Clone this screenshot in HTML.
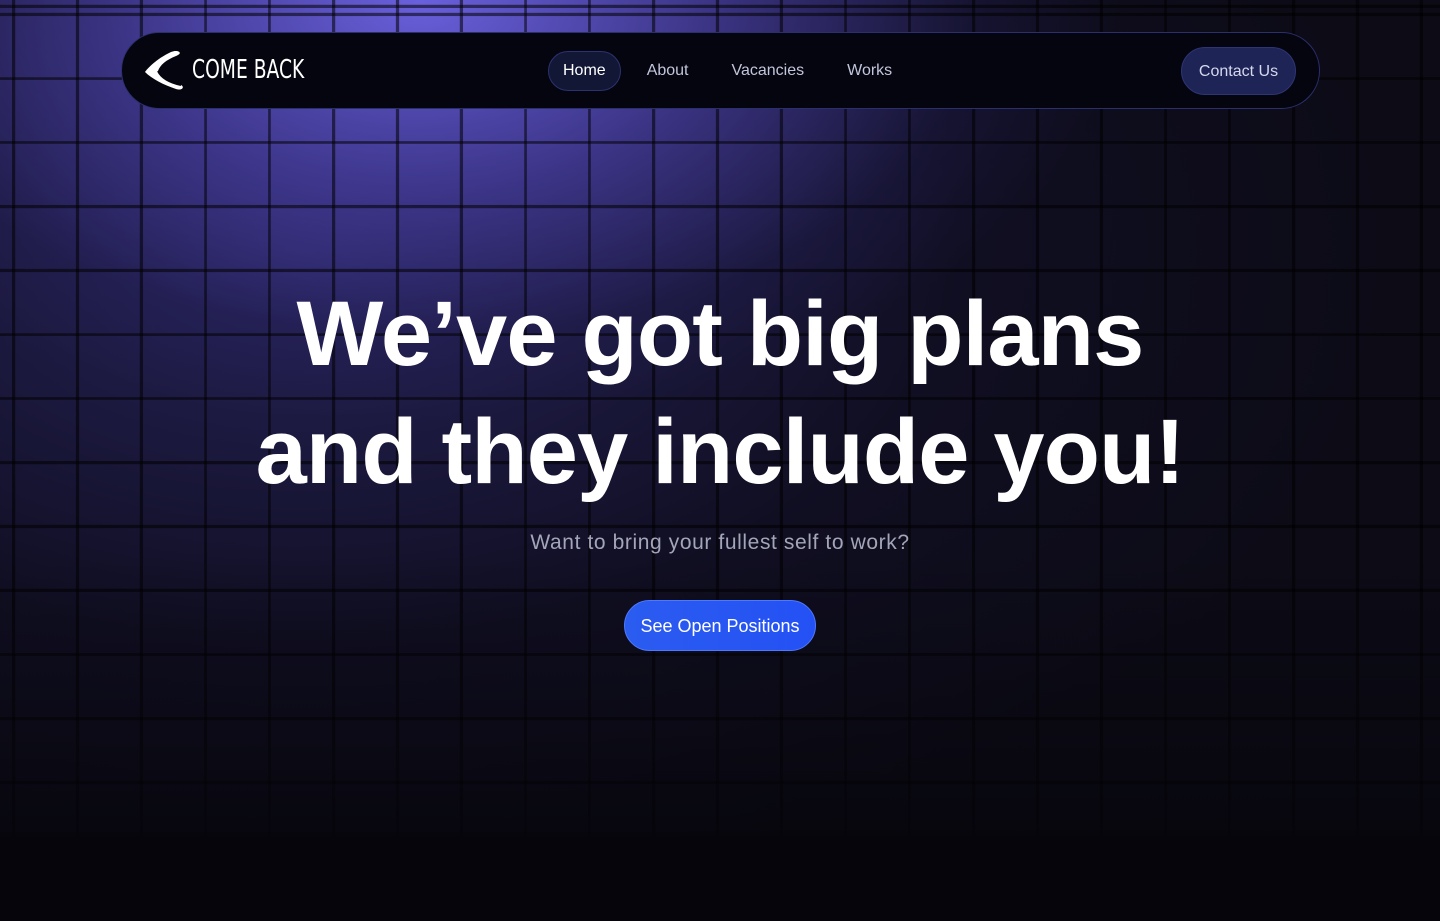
<!DOCTYPE html>
<html><head><meta charset="utf-8"><style>
*{margin:0;padding:0;box-sizing:border-box}
body{width:1440px;height:921px;overflow:hidden;background:#06050b;font-family:"Liberation Sans",sans-serif;position:relative}
.bg{position:absolute;left:0;top:0;width:1440px;height:921px;
background:
 radial-gradient(ellipse 700px 420px at 420px 0px, rgba(110,100,230,0.95), rgba(80,70,180,0.6) 45%, rgba(40,35,100,0.25) 80%, rgba(0,0,0,0) 100%),
 radial-gradient(ellipse 1100px 650px at 300px 250px, rgba(50,45,120,0.7), rgba(20,18,45,0.5) 60%, rgba(0,0,0,0) 100%),
 #0c0b16;}
.grid{position:absolute;left:0;top:0;width:1440px;height:840px;
background:
 repeating-linear-gradient(90deg, rgba(0,0,0,0.55) 0 3px, transparent 3px 64px),
 repeating-linear-gradient(0deg, rgba(0,0,0,0.55) 0 3px, transparent 3px 64px);
background-position:12px 0, 0 8px;}
.fade{position:absolute;left:0;top:0;width:1440px;height:921px;background:linear-gradient(180deg,transparent 0,transparent 60%,rgba(6,5,11,0.4) 80%,rgba(6,5,11,0.7) 90%,#06050b 91%)}
nav{position:absolute;left:121px;top:32px;width:1199px;height:77px;border-radius:40px;background:#05050f;border:1px solid #2c2f6e}
.logo{position:absolute;left:22px;top:16px}
.brand{position:absolute;left:70px;top:22px;color:#fff;font-family:"DejaVu Sans Condensed","Liberation Sans Narrow",sans-serif;font-size:26px;transform:scaleX(0.8);transform-origin:left}
.links{position:absolute;left:426px;top:18px;display:flex;align-items:center}
.links a{color:#c3c5dc;font-size:16px;text-decoration:none;margin-right:43px}
.home{border:1px solid #2b3270;background:#121736;border-radius:20px;padding:10px 14px;color:#fff!important;margin-right:26px!important}
.contact{position:absolute;right:23px;top:14px;width:115px;height:48px;border-radius:24px;background:#1e2455;color:#d5d8f0;font-size:16px;line-height:48px;text-align:center;border:1px solid #2d3575}
h1{position:absolute;left:0;width:1440px;text-align:center;color:#fff;font-size:92px;font-weight:bold;letter-spacing:-0.8px;line-height:118px;top:275px}
p{position:absolute;left:0;width:1440px;text-align:center;top:531px;color:#a3a5b8;font-size:21px;letter-spacing:0.6px}
.btn{position:absolute;left:624px;top:600px;width:192px;height:51px;border-radius:26px;background:linear-gradient(90deg,#2b5cf0,#2451f4);color:#fff;font-size:18px;line-height:51px;text-align:center;border:1px solid #4d78ff}
</style></head><body>
<div class="bg"></div><div class="grid"></div><div class="fade"></div>
<nav>
 <svg class="logo" width="40" height="42" viewBox="0 0 40 42"><path d="M27 3 C34 0 40 4 32 7 C22 11 16 16 14 22 C18 30 28 34 37 36 C41 38 38 42 32 40 C20 36 8 30 1 23 C3 20 12 10 27 3 Z" fill="#fff"/><path d="M14 22 C18 30 28 34 37 36" stroke="#05050f" stroke-width="2" fill="none"/></svg>
 <div class="brand">COME BACK</div>
 <div class="links"><a class="home">Home</a><a>About</a><a>Vacancies</a><a>Works</a></div>
 <div class="contact">Contact Us</div>
</nav>
<h1>We’ve got big plans<br>and they include you!</h1>
<p>Want to bring your fullest self to work?</p>
<div class="btn">See Open Positions</div>
</body></html>
